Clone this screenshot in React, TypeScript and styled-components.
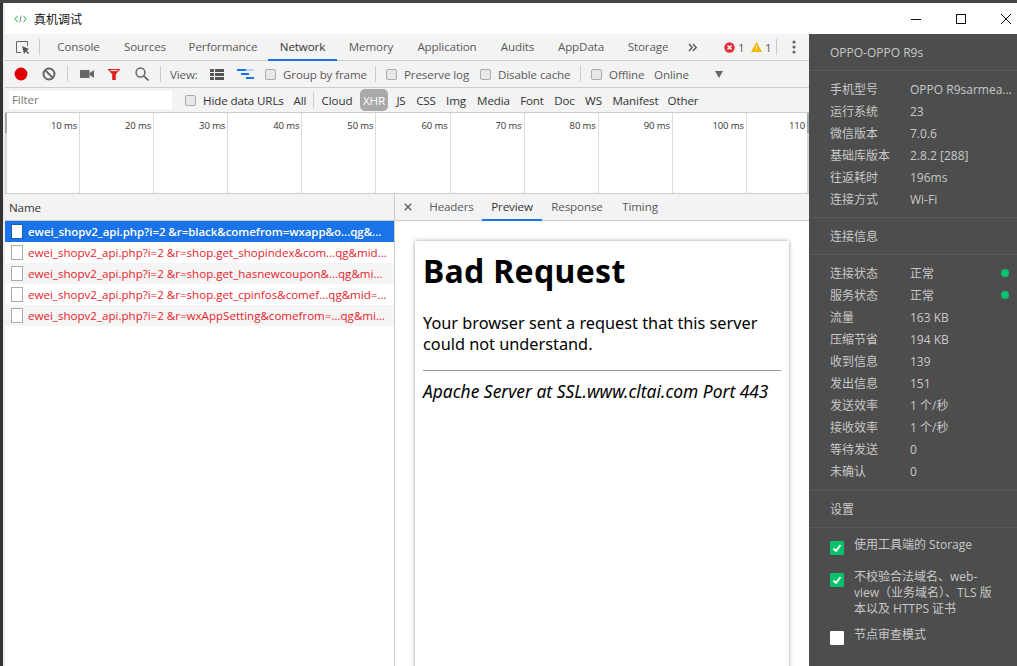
import React from 'react';
import styled, { createGlobalStyle } from 'styled-components';

const Global = createGlobalStyle`
  html, body { margin: 0; padding: 0; height: 100%; overflow: hidden; background: #fff; }
  * { box-sizing: border-box; }
  #root { height: 666px; width: 1017px; }
`;
const SEGOE = `"Open Sans", "Noto Sans CJK SC", sans-serif`;
const NOTO = `"Noto Sans", "Noto Sans CJK SC", sans-serif`;

const Page = styled.div`
  width: 1017px; height: 666px; display: flex; flex-direction: column;
  background: #fff; font-family: ${SEGOE}; overflow: hidden;
`;
const TopStrip = styled.div`height: 3px; background: #464646; flex: none;`;
const Main = styled.div`flex: 1; display: flex; min-height: 0;`;
const LeftEdge = styled.div`
  width: 5px; flex: none;
  background: linear-gradient(to right, #333 0, #333 3px, #ececec 3px, #ececec 5px);
`;
const Window = styled.div`flex: 1; display: flex; flex-direction: column; min-width: 0;`;
const TitleBar = styled.div`
  height: 31px; flex: none; display: flex; align-items: center; padding-left: 9px; gap: 7px;
  font-size: 12px; color: #111; font-family: "Noto Sans CJK SC", sans-serif; background: #fff;
`;
const WinButtons = styled.div`margin-left: auto; display: flex; align-items: center; gap: 35px; padding-right: 6px;`;
const Body = styled.div`flex: 1; display: flex; min-height: 0;`;
const Devtools = styled.div`flex: 1; display: flex; flex-direction: column; min-width: 0; background: #fff;`;
const Side = styled.div`
  width: 208px; flex: none; background: #4d4d4d; color: #c8c8c8; font-size: 12px;
`;
const TabBar = styled.div`
  height: 27px; flex: none; display: flex; align-items: stretch; background: #f3f3f3;
  border-bottom: 1px solid #ccc; color: #5a5a5a; font-size: 11.6px; letter-spacing: -0.12px; padding-left: 10px;
`;
const IconSlot = styled.div<{ $w?: number }>`
  display: flex; align-items: center; justify-content: center; flex: none;
  ${p => p.$w ? `width: ${p.$w}px;` : ''}
`;
const Spacer = styled.div<{ $w: number }>`width: ${p => p.$w}px; flex: none;`;
const VSep = styled.div<{ $h?: number; $mx?: number }>`
  width: 1px; height: ${p => p.$h ?? 16}px; background: #ccc; align-self: center; margin: 0 ${p => p.$mx ?? 6}px; flex: none;
`;
const InspectSep = styled(VSep)`margin: 0 5px 0 9px;`;
const Tab = styled.div<{ $active?: boolean; $w: number }>`
  width: ${p => p.$w}px; flex: none; display: flex; align-items: center; justify-content: center;
  color: ${p => p.$active ? '#333' : '#5a5a5a'};
  border-bottom: 2px solid ${p => p.$active ? '#1a73e8' : 'transparent'};
  margin-bottom: -1px; white-space: nowrap;
`;
const Counter = styled.div<{ $mr: number }>`
  display: flex; align-items: center; gap: 3px; color: #5a5a5a; margin-right: ${p => p.$mr}px; width: 21px; flex: none;
`;
const Toolbar = styled.div`
  height: 27px; flex: none; display: flex; align-items: center; background: #f3f3f3;
  border-bottom: 1px solid #ccc; color: #5a5a5a; font-size: 11.6px; letter-spacing: -0.12px; padding-left: 9px;
`;
const ToolIcon = styled.svg<{ $ml?: number }>`flex: none; margin-left: ${p => p.$ml ?? 0}px;`;
const Check = styled.span`
  width: 11px; height: 11px; flex: none; border: 1px solid #aaa; border-radius: 2px; background: #e8e8e8; display: inline-block;
`;
const CheckLabel = styled.div<{ $w: number; $ml?: number }>`
  display: flex; align-items: center; gap: 7px; flex: none; width: ${p => p.$w}px;
  margin-left: ${p => p.$ml ?? 0}px; white-space: nowrap;
`;
const Plain = styled.span<{ $w: number; $ml?: number }>`
  width: ${p => p.$w}px; margin-left: ${p => p.$ml ?? 0}px; flex: none; white-space: nowrap;
`;
const FilterBar = styled.div`
  height: 25px; flex: none; display: flex; align-items: center; background: #f3f3f3;
  border-bottom: 1px solid #ccc; color: #333; font-size: 11.6px; letter-spacing: -0.12px; padding-left: 4px;
`;
const FilterInput = styled.div`
  width: 163px; height: 18px; background: #fff; color: #777; padding-left: 3px; line-height: 18px; flex: none;
`;
const FilterType = styled.div<{ $on?: boolean; $w: number; $ml?: number }>`
  width: ${p => p.$w}px; margin-left: ${p => p.$ml ?? 0}px; flex: none; text-align: center;
  height: 22px; line-height: 23px; border-radius: 5px; white-space: nowrap;
  background: ${p => p.$on ? '#a9a9a9' : 'transparent'}; color: ${p => p.$on ? '#fff' : '#333'};
`;
const Timeline = styled.div`
  height: 81px; flex: none; display: flex; background: #fff; border-bottom: 1px solid #ccc;
  overflow: hidden; position: relative; padding-left: 1px;
`;
const Tick = styled.div<{ $pr?: number }>`
  width: 74.1px; flex: none; border-right: 1px solid #ddd; text-align: right; padding: 6px ${p => p.$pr ?? 2}px 0 0;
  font-size: 9.5px; letter-spacing: -0.1px; color: #333; white-space: nowrap;
`;
const Handle = styled.div<{ $side: 'left' | 'right' }>`
  position: absolute; top: 0; bottom: 0; width: 2px; ${p => p.$side}: 0;
  background: linear-gradient(to bottom, #a8a8a8 0, #a8a8a8 20px, #d8d8d8 20px);
`;
const Split = styled.div`flex: 1; display: flex; min-height: 0;`;
const ListCol = styled.div`width: 390px; flex: none; display: flex; flex-direction: column; border-right: 1px solid #ccc;`;
const Head = styled.div`
  height: 27px; flex: none; background: #f3f3f3; border-bottom: 1px solid #ccc; display: flex; align-items: center;
  font-size: 11.6px; letter-spacing: -0.12px; color: #333;
`;
const NameHead = styled(Head)`padding-left: 4px; padding-top: 1px;`;
const Row = styled.div<{ $sel?: boolean; $odd?: boolean }>`
  height: 21px; flex: none; display: flex; align-items: center; padding-left: 6px; gap: 5px;
  font-size: ${p => p.$sel ? 11.5 : 11.57}px; letter-spacing: ${p => p.$sel ? -0.06 : 0}px; white-space: nowrap; overflow: hidden;
  background: ${p => p.$sel ? '#1a73e8' : p.$odd ? '#f5f5f5' : '#fff'};
  color: ${p => p.$sel ? '#fff' : '#e8222a'}; font-weight: ${p => p.$sel ? 600 : 400};
`;
const FileIcon = styled.span<{ $sel?: boolean }>`
  width: 12px; height: 15px; flex: none; background: #fff; border: 1px solid ${p => p.$sel ? '#1a5fb4' : '#aaa'};
`;
const PreviewCol = styled.div`flex: 1; display: flex; flex-direction: column; min-width: 0;`;
const CloseX = styled.div`width: 26px; display: flex; justify-content: center; flex: none;`;
const DetailTab = styled.div<{ $active?: boolean; $w: number }>`
  width: ${p => p.$w}px; height: 27px; display: flex; align-items: center; justify-content: center; flex: none;
  padding-top: 1px; color: ${p => p.$active ? '#333' : '#5a5a5a'};
  border-bottom: 2px solid ${p => p.$active ? '#1a73e8' : 'transparent'};
`;
const PreviewBody = styled.div`flex: 1; background: #fff; padding: 20px 20px 0; overflow: hidden; min-height: 0;`;
const Sheet = styled.div`
  width: 374px; height: 500px; background: #fff; box-shadow: 0 0 4px rgba(0,0,0,.4); padding: 8px 8px 0; color: #000;
`;
const H1 = styled.h1`margin: 0 0 20px; font-size: 32px; line-height: 44px; font-weight: 700; letter-spacing: 0.01em; font-family: ${NOTO};`;
const P = styled.p`margin: 0; font-size: 16.3px; line-height: 21px; font-family: ${NOTO};`;
const Hr = styled.hr`margin: 15px 0 9px; border: 0; border-top: 1px solid #999;`;
const Addr = styled.address`font-size: 17.4px; line-height: 22px; font-style: italic; font-family: ${NOTO}; white-space: nowrap;`;

const SideHeader = styled.div`height: 37px; display: flex; align-items: center; padding-left: 21px; border-bottom: 1px solid #585858;`;
const SideSection = styled.div<{ $pt: number; $pb: number }>`padding: ${p => p.$pt}px 0 ${p => p.$pb}px 21px; border-bottom: 1px solid #585858;`;
const InfoRow = styled.div`height: 22px; display: flex; align-items: center; position: relative;`;
const InfoKey = styled.div`width: 80px; flex: none;`;
const InfoVal = styled.div`white-space: nowrap;`;
const Dot = styled.span`position: absolute; right: 8px; top: 7px; width: 8px; height: 8px; border-radius: 50%; background: #06c26c;`;
const SettingRow = styled.div<{ $mb: number }>`display: flex; gap: 10px; padding-left: 21px; margin-bottom: ${p => p.$mb}px; line-height: 16px;`;
const Box = styled.span<{ $on?: boolean }>`
  width: 14px; height: 14px; flex: none; margin-top: 4px; border-radius: 1px; background: ${p => p.$on ? '#06c26c' : '#fff'};
  display: flex; align-items: center; justify-content: center;
`;
const SettingsWrap = styled.div`padding-top: 9px;`;

const BoxTick = () => (
  <svg width="10" height="10" viewBox="0 0 10 10"><path d="M1.5 5.5L4 8l4.5-6" fill="none" stroke="#fff" strokeWidth="1.8" /></svg>
);

const ticks = [10,20,30,40,50,60,70,80,90,100];
const rows = [
  'ewei_shopv2_api.php?i=2 &r=black&comefrom=wxapp&o...qg&...',
  'ewei_shopv2_api.php?i=2 &r=shop.get_shopindex&com...qg&mid...',
  'ewei_shopv2_api.php?i=2 &r=shop.get_hasnewcoupon&...qg&mi...',
  'ewei_shopv2_api.php?i=2 &r=shop.get_cpinfos&comef...qg&mid=...',
  'ewei_shopv2_api.php?i=2 &r=wxAppSetting&comefrom=...qg&mi...',
];
const info1 = [['手机型号','OPPO R9sarmea...'],['运行系统','23'],['微信版本','7.0.6'],['基础库版本','2.8.2 [288]'],['往返耗时','196ms'],['连接方式','Wi-Fi']];
const info2: [string,string,boolean?][] = [['连接状态','正常',true],['服务状态','正常',true],['流量','163 KB'],['压缩节省','194 KB'],['收到信息','139'],['发出信息','151'],['发送效率','1 个/秒'],['接收效率','1 个/秒'],['等待发送','0'],['未确认','0']];
const tabs: [string, number][] = [['Console',67],['Sources',66],['Performance',90],['Network',69],['Memory',68],['Application',84],['Audits',57],['AppData',70],['Storage',64]];
const types: [string, number][] = [['Cloud',46],['XHR',28],['JS',26],['CSS',24],['Img',36],['Media',39],['Font',38],['Doc',27],['WS',31],['Manifest',53],['Other',42]];

export default function App() {
  return (
    <Page>
      <Global />
      <TopStrip />
      <Main>
        <LeftEdge />
        <Window>
          <TitleBar>
            <svg width="13" height="10" viewBox="0 0 13 10">
              <path d="M3.5 2L1 5l2.5 3M9.5 2L12 5 9.5 8" fill="none" stroke="#3fc45a" strokeWidth="1.1" />
              <path d="M7.2 1.5L5.8 8.5" fill="none" stroke="#888" strokeWidth="1" />
            </svg>
            <span>真机调试</span>
            <WinButtons>
              <svg width="10" height="10" viewBox="0 0 10 10"><path d="M0 5.5h10" stroke="#111" /></svg>
              <svg width="10" height="10" viewBox="0 0 10 10"><rect x=".5" y=".5" width="9" height="9" fill="none" stroke="#111" /></svg>
              <svg width="10" height="10" viewBox="0 0 10 10"><path d="M0 0l10 10M10 0L0 10" stroke="#111" /></svg>
            </WinButtons>
          </TitleBar>
          <Body>
            <Devtools>
              <TabBar>
                <IconSlot>
                  <svg width="15" height="15" viewBox="0 0 15 15">
                    <path d="M6 12.5H1.5v-11h11V6" fill="none" stroke="#666" />
                    <path d="M7 6l2 8 1.6-2.6L13.2 14l1-1-2.6-2.4L14 9z" fill="#555" />
                  </svg>
                </IconSlot>
                <InspectSep />
                {tabs.map(([t, w]) => <Tab key={t} $w={w} $active={t === 'Network'}>{t}</Tab>)}
                <IconSlot $w={26}>
                  <svg width="10" height="9" viewBox="0 0 10 9"><path d="M1 1l3.2 3.5L1 8M5 1l3.2 3.5L5 8" fill="none" stroke="#555" strokeWidth="1.4" /></svg>
                </IconSlot>
                <Spacer $w={18} />
                <Counter $mr={6}>
                  <svg width="11" height="11" viewBox="0 0 11 11"><circle cx="5.5" cy="5.5" r="5.2" fill="#e0313a" /><path d="M3.5 3.5l4 4M7.5 3.5l-4 4" stroke="#fff" strokeWidth="1.3" /></svg>
                  1
                </Counter>
                <Counter $mr={4}>
                  <svg width="11" height="10" viewBox="0 0 11 10"><path d="M5.5 0L11 10H0z" fill="#f4b400" /><path d="M5.5 3.5v3.2M5.5 7.6v1" stroke="#fff" /></svg>
                  1
                </Counter>
                <VSep $mx={0} />
                <IconSlot $w={33}>
                  <svg width="4" height="14" viewBox="0 0 4 14"><circle cx="2" cy="2" r="1.6" fill="#666" /><circle cx="2" cy="7" r="1.6" fill="#666" /><circle cx="2" cy="12" r="1.6" fill="#666" /></svg>
                </IconSlot>
              </TabBar>
              <Toolbar>
                <ToolIcon width="14" height="14" viewBox="0 0 14 14"><circle cx="7" cy="7" r="6.4" fill="#e00000" /></ToolIcon>
                <ToolIcon $ml={14} width="14" height="14" viewBox="0 0 14 14"><circle cx="7" cy="7" r="5.5" fill="none" stroke="#666" strokeWidth="2" /><path d="M3 3l8 8" stroke="#666" strokeWidth="2" /></ToolIcon>
                <VSep $mx={11} />
                <ToolIcon $ml={1} width="14" height="10" viewBox="0 0 14 10"><rect x="0" y="1" width="9.5" height="8" fill="#666" /><path d="M9.5 4L14 1v8L9.5 6z" fill="#666" /></ToolIcon>
                <ToolIcon $ml={13} width="14" height="13" viewBox="0 0 14 13"><path d="M.5 1h13L8.8 6.2V12H5.2V6.2z" fill="#e02020" /><path d="M3.5 2.6h7" stroke="#fff" /></ToolIcon>
                <ToolIcon $ml={14} width="14" height="14" viewBox="0 0 14 14"><circle cx="5.5" cy="5.5" r="4.4" fill="none" stroke="#666" strokeWidth="1.5" /><path d="M8.8 8.8L13.5 13.5" stroke="#666" strokeWidth="1.8" /></ToolIcon>
                <VSep $mx={11} />
                <Plain $w={28} $ml={-2}>View:</Plain>
                <ToolIcon $ml={12} width="14" height="11" viewBox="0 0 14 11" shapeRendering="crispEdges"><path d="M0 0h4v3H0zM5 0h9v3H5zM0 4h4v3H0zM5 4h9v3H5zM0 8h4v3H0zM5 8h9v3H5z" fill="#555" /></ToolIcon>
                <ToolIcon $ml={13} width="17" height="11" viewBox="0 0 17 11" shapeRendering="crispEdges"><path d="M0 0h9v2H0zM4 4h8v2H4zM9 8h8v2H9z" fill="#1a73e8" /><path d="M9 0h8v2H9z" fill="#bcd4f4" /></ToolIcon>
                <CheckLabel $ml={11} $w={101}><Check />Group by frame</CheckLabel>
                <VSep $mx={9} />
                <CheckLabel $ml={1} $w={83}><Check />Preserve log</CheckLabel>
                <CheckLabel $ml={11} $w={90}><Check />Disable cache</CheckLabel>
                <VSep $mx={10} />
                <CheckLabel $w={53}><Check />Offline</CheckLabel>
                <Plain $w={34} $ml={10}>Online</Plain>
                <ToolIcon $ml={27} width="8" height="7" viewBox="0 0 8 7"><path d="M0 0h8L4 7z" fill="#666" /></ToolIcon>
              </Toolbar>
              <FilterBar>
                <FilterInput>Filter</FilterInput>
                <CheckLabel $ml={13} $w={99}><Check />Hide data URLs</CheckLabel>
                <FilterType $ml={3} $w={26}>All</FilterType>
                <VSep $mx={0} />
                {types.map(([t, w]) => <FilterType key={t} $w={w} $on={t === 'XHR'}>{t}</FilterType>)}
              </FilterBar>
              <Timeline>
                {ticks.map(t => <Tick key={t}>{t} ms</Tick>)}
                <Tick $pr={15}>110</Tick>
                <Handle $side="left" />
                <Handle $side="right" />
              </Timeline>
              <Split>
                <ListCol>
                  <NameHead>Name</NameHead>
                  {rows.map((r, i) => (
                    <Row key={r} $sel={i === 0} $odd={i % 2 === 0}>
                      <FileIcon $sel={i === 0} />
                      {r}
                    </Row>
                  ))}
                </ListCol>
                <PreviewCol>
                  <Head>
                    <CloseX>
                      <svg width="8" height="8" viewBox="0 0 8 8"><path d="M.8.8l6.4 6.4M7.2.8L.8 7.2" stroke="#666" strokeWidth="1.5" /></svg>
                    </CloseX>
                    <DetailTab $w={61}>Headers</DetailTab>
                    <DetailTab $active $w={60}>Preview</DetailTab>
                    <DetailTab $w={70}>Response</DetailTab>
                    <DetailTab $w={56}>Timing</DetailTab>
                  </Head>
                  <PreviewBody>
                    <Sheet>
                      <H1>Bad Request</H1>
                      <P>Your browser sent a request that this server could not understand.</P>
                      <Hr />
                      <Addr>Apache Server at SSL.www.cltai.com Port 443</Addr>
                    </Sheet>
                  </PreviewBody>
                </PreviewCol>
              </Split>
            </Devtools>
            <Side>
              <SideHeader>OPPO-OPPO R9s</SideHeader>
              <SideSection $pt={7} $pb={7}>
                {info1.map(([k, v]) => <InfoRow key={k}><InfoKey>{k}</InfoKey><InfoVal>{v}</InfoVal></InfoRow>)}
              </SideSection>
              <SideHeader>连接信息</SideHeader>
              <SideSection $pt={7} $pb={8}>
                {info2.map(([k, v, d]) => <InfoRow key={k}><InfoKey>{k}</InfoKey><InfoVal>{v}</InfoVal>{d && <Dot />}</InfoRow>)}
              </SideSection>
              <SideHeader>设置</SideHeader>
              <SettingsWrap>
                <SettingRow $mb={14}><Box $on><BoxTick /></Box><span>使用工具端的 Storage</span></SettingRow>
                <SettingRow $mb={10}><Box $on><BoxTick /></Box><span>不校验合法域名、web-<br />view（业务域名）、TLS 版<br />本以及 HTTPS 证书</span></SettingRow>
                <SettingRow $mb={0}><Box /><span>节点审查模式</span></SettingRow>
              </SettingsWrap>
            </Side>
          </Body>
        </Window>
      </Main>
    </Page>
  );
}
